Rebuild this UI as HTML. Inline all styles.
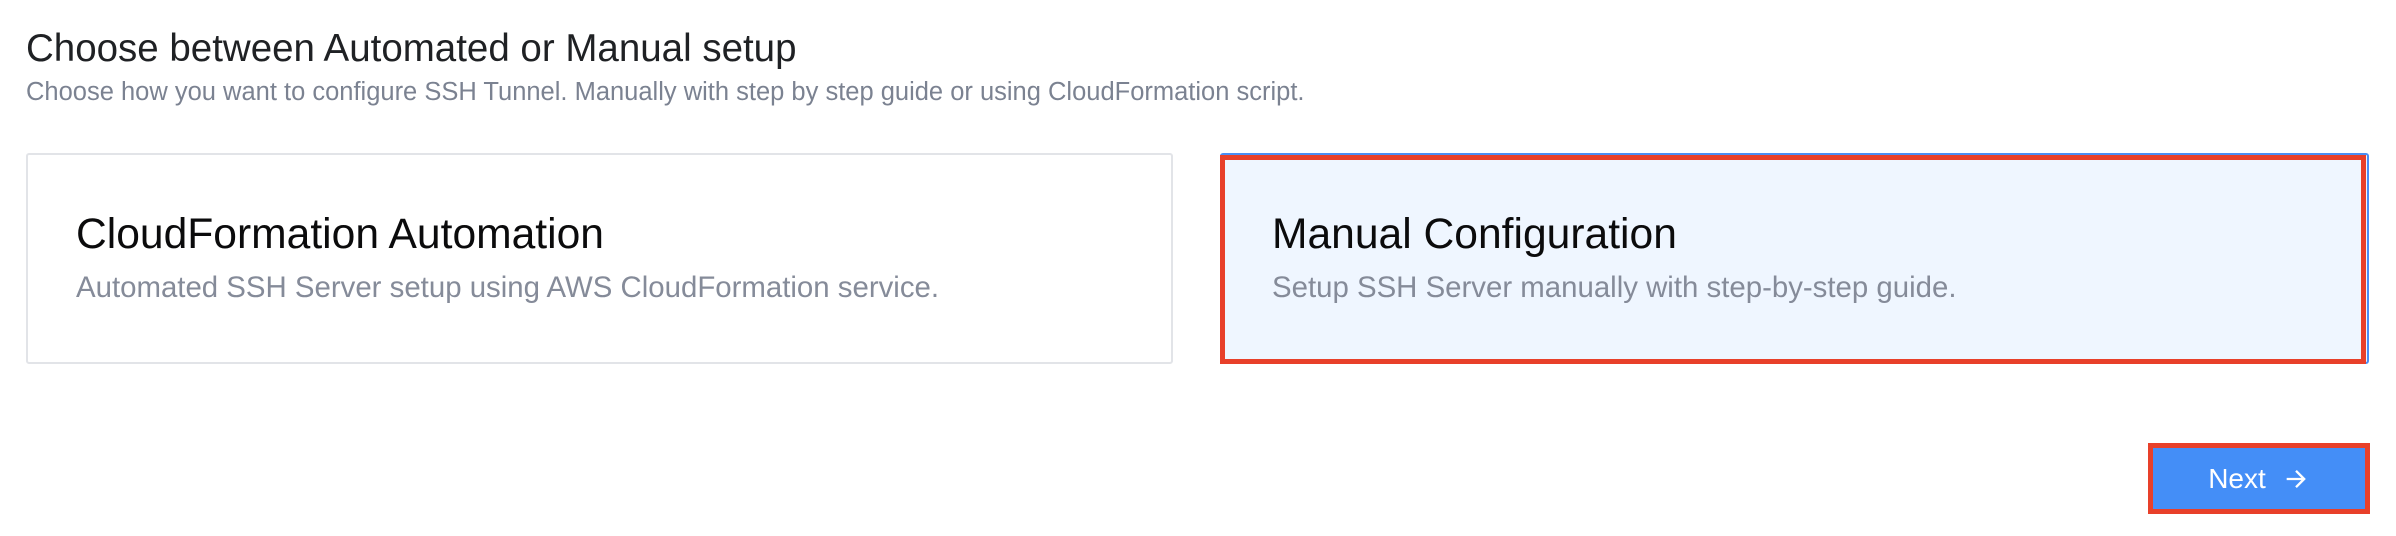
<!DOCTYPE html>
<html><head><style>
body{margin:0;width:2396px;height:536px;background:#fff;font-family:"Liberation Sans",sans-serif;position:relative;overflow:hidden}
.a{position:absolute;white-space:nowrap}
.card{position:absolute;top:153px;height:211px;box-sizing:border-box;border-radius:3px}
</style></head><body>
<div class="a" style="left:26px;top:27px;font-size:38.5px;color:#1f2124">Choose between Automated or Manual setup</div>
<div class="a" style="left:26px;top:78px;font-size:25.5px;color:#7b8291">Choose how you want to configure SSH Tunnel. Manually with step by step guide or using CloudFormation script.</div>
<div class="card" style="left:26px;width:1147px;border:2px solid #e2e4e8;background:#fff"></div>
<div class="a" style="left:76px;top:210px;font-size:42.6px;color:#0b0b0c">CloudFormation Automation</div>
<div class="a" style="left:76px;top:271px;font-size:29.4px;color:#858b99">Automated SSH Server setup using AWS CloudFormation service.</div>
<div class="card" style="left:1220px;width:1149px;border:2px solid #4a8ef5;background:#eff6ff"></div>
<div class="card" style="left:1220px;top:155px;height:209px;width:1146px;border:5px solid #e8402a;border-radius:0"></div>
<div class="a" style="left:1272px;top:210px;font-size:42.6px;color:#0b0b0c">Manual Configuration</div>
<div class="a" style="left:1272px;top:271px;font-size:29.4px;color:#858b99">Setup SSH Server manually with step-by-step guide.</div>
<div class="a" style="left:2148px;top:443px;width:222px;height:71px;box-sizing:border-box;border:5px solid #e8402a;background:#448ef7;color:#fff;font-size:28px;display:flex;align-items:center;justify-content:center">Next<svg width="28" height="28" viewBox="0 0 24 24" style="margin-left:16px"><path d="M4 12h15M12 5l7 7-7 7" fill="none" stroke="#fff" stroke-width="2"/></svg></div>
</body></html>
